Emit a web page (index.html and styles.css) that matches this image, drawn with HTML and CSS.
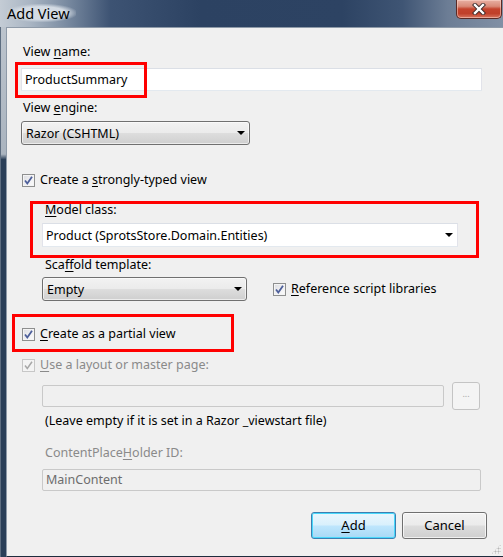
FILE: index.html
```html
<!DOCTYPE html>
<html>
<head>
<meta charset="utf-8">
<title>Add View</title>
<link rel="stylesheet" href="styles.css">
</head>
<body>
<div class="window">
  <div class="titlebar">
    <span class="title">Add View</span>
    <div class="close">
      <svg width="20" height="12" viewBox="0 0 20 12">
        <path d="M6 2 L14 10 M14 2 L6 10" stroke="#3b2a2a" stroke-width="4.2" stroke-linecap="square"/>
        <path d="M6 2 L14 10 M14 2 L6 10" stroke="#ffffff" stroke-width="2.4" stroke-linecap="square"/>
      </svg>
    </div>
  </div>
  <div class="body">
    <div class="frame-left"></div>
    <div class="panel">
      <div class="label l-name">View <u>n</u>ame:</div>
      <div class="textbox tb-name">ProductSummary</div>
      <div class="label l-engine">View <u>e</u>ngine:</div>
      <div class="combo combo-engine"><span>Razor (CSHTML)</span><i class="arrow"></i></div>

      <div class="check-row r-typed">
        <span class="cb"><svg width="13" height="13" viewBox="0 0 13 13"><path d="M3 6.5 L5.3 9.5 L10 2.8" stroke="#4d5f9a" stroke-width="1.8" fill="none"/></svg></span>
        <span>Create a <u>s</u>trongly-typed view</span>
      </div>

      <div class="indent">
        <div class="label l-model"><u>M</u>odel class:</div>
        <div class="textbox combo-edit"><span>Product (SprotsStore.Domain.Entities)</span><i class="arrow"></i></div>
        <div class="label l-scaffold">Sca<u>f</u>fold template:</div>
        <div class="scaffold-row">
          <div class="combo combo-scaffold"><span>Empty</span><i class="arrow"></i></div>
          <div class="check-row inline">
            <span class="cb"><svg width="13" height="13" viewBox="0 0 13 13"><path d="M3 6.5 L5.3 9.5 L10 2.8" stroke="#4d5f9a" stroke-width="1.8" fill="none"/></svg></span>
            <span><u>R</u>eference script libraries</span>
          </div>
        </div>
      </div>

      <div class="check-row r-partial">
        <span class="cb"><svg width="13" height="13" viewBox="0 0 13 13"><path d="M3 6.5 L5.3 9.5 L10 2.8" stroke="#4d5f9a" stroke-width="1.8" fill="none"/></svg></span>
        <span><u>C</u>reate as a partial view</span>
      </div>
      <div class="check-row r-layout disabled">
        <span class="cb"><svg width="13" height="13" viewBox="0 0 13 13"><path d="M3 6.5 L5.3 9.5 L10 2.8" stroke="#a8a8a8" stroke-width="1.5" fill="none"/></svg></span>
        <span><u>U</u>se a layout or master page:</span>
      </div>

      <div class="indent">
        <div class="layout-row">
          <div class="textbox tb-disabled tb-layout"></div>
          <div class="btn-browse">...</div>
        </div>
        <div class="label l-leave">(Leave empty if it is set in a Razor _viewstart file)</div>
        <div class="label l-cph disabled">ContentPlace<u>H</u>older ID:</div>
        <div class="textbox tb-disabled tb-cph">MainContent</div>
      </div>

      <div class="buttons">
        <div class="btn btn-default"><u>A</u>dd</div>
        <div class="btn">Cancel</div>
      </div>

      <div class="grip"></div>

      <div class="mark mark-1"></div>
      <div class="mark mark-2"></div>
      <div class="mark mark-3"></div>
    </div>
  </div>
</div>
</body>
</html>
```
FILE: styles.css
```css
* { box-sizing: border-box; }
html, body { margin: 0; padding: 0; }
body {
  width: 503px;
  height: 557px;
  overflow: hidden;
  font-family: "Noto Sans", "Open Sans", sans-serif;
  font-size: 12.5px;
  color: #000;
}
u { text-decoration: underline; text-underline-offset: 2px; }

.window {
  width: 503px;
  height: 557px;
  display: flex;
  flex-direction: column;
  background: #2b3f58;
}

.titlebar {
  height: 27px;
  flex: none;
  position: relative;
  display: flex;
  align-items: flex-start;
  background: linear-gradient(90deg, #c4ccd5 0%, #a9b5c3 6%, #7b8ca2 13%, #3d5373 22%, #2c4262 40%, #2d4363 68%, #3f5574 80%, #6c7d95 89%, #8190a5 100%);
}
.title {
  margin: 4px 0 0 7px;
  font-size: 14.5px;
  line-height: 18px;
  color: #000;
  padding: 0 6px 0 0;
  background: radial-gradient(ellipse at center, rgba(215,222,230,0.95) 50%, rgba(215,222,230,0) 75%);
}
.close {
  position: absolute;
  right: 1px;
  top: 0;
  width: 46px;
  height: 19px;
  border: 1px solid #5a2a25;
  border-top: none;
  border-radius: 0 0 5px 5px;
  background: linear-gradient(180deg, #e8b0a3 0%, #d98a78 35%, #c4432d 50%, #c0402a 75%, #d7755f 100%);
  box-shadow: inset 0 0 0 1px rgba(255,220,210,0.5);
  display: flex;
  align-items: center;
  justify-content: center;
}

.body {
  flex: 1;
  display: flex;
}
.frame-left {
  width: 6px;
  flex: none;
  background: linear-gradient(180deg, #bcc4cd 0%, #aab4bf 24%, #2a3f58 25%, #2a3f58 100%);
  border-left: 1px solid #5d6d80;
}
.panel {
  position: relative;
  flex: 1;
  height: 530px;
  background: #f0f0f0;
  border: 1px solid #8e9aa8;
  border-right: none;
  border-bottom: 1px solid #1e2c3e;
  padding: 0 16px 0 14px;
}

.label {
  line-height: 16px;
  padding-left: 2px;
  white-space: nowrap;
}
.disabled { color: #8a8a8a; }

.l-name { margin-top: 16px; }
.textbox {
  height: 23px;
  background: #fff;
  border: 1px solid #e2e3ea;
  border-top-color: #dbdfe6;
  border-bottom-color: #e3e9ef;
  line-height: 21px;
  padding-left: 3px;
  white-space: nowrap;
}
.tb-name { margin-top: 8px; width: 461px; }
.l-engine { margin-top: 9px; }

.combo {
  height: 24px;
  border: 1px solid #707070;
  border-radius: 3px;
  background: linear-gradient(180deg, #f2f2f2 0%, #ebebeb 48%, #dddddd 52%, #cfcfcf 100%);
  box-shadow: inset 0 0 0 1px rgba(255,255,255,0.6);
  display: flex;
  align-items: center;
  justify-content: space-between;
  padding: 0 4px 0 4px;
}
.arrow {
  width: 0; height: 0;
  border-left: 4px solid transparent;
  border-right: 4px solid transparent;
  border-top: 4px solid #000;
}
.combo-engine { margin-top: 5px; width: 229px; }

.check-row {
  display: flex;
  align-items: center;
  gap: 5px;
  line-height: 16px;
  height: 16px;
  white-space: nowrap;
  padding-left: 1px;
}
.cb {
  width: 13px;
  height: 13px;
  border: 1px solid #8e8f8f;
  background: linear-gradient(135deg, #dadbe0 0%, #f2f2f4 60%, #fbfbfb 100%);
  box-shadow: inset 0 0 0 1px #f4f4f4;
  display: flex;
  flex: none;
  position: relative;
}
.cb svg { position: absolute; left: -1px; top: -1px; }
.disabled .cb { border-color: #c7c7c7; background: #f4f4f4; }
.r-typed { margin-top: 27px; }

.indent { padding-left: 21px; }
.l-model { margin-top: 14px; padding-left: 3px; }
.combo-edit {
  margin-top: 5px;
  width: 416px;
  height: 24px;
  display: flex;
  align-items: center;
  justify-content: space-between;
  padding: 0 4px 0 3px;
}
.l-scaffold { margin-top: 10px; padding-left: 3px; }
.scaffold-row {
  margin-top: 4px;
  display: flex;
  align-items: center;
  gap: 26px;
}
.combo-scaffold { width: 205px; }
.check-row.inline { gap: 5px; padding-left: 0; }

.r-partial { margin-top: 25px; }
.r-layout { margin-top: 15px; }

.layout-row {
  margin-top: 9px;
  display: flex;
  align-items: center;
  gap: 8px;
  height: 28px;
}
.tb-disabled {
  background: #f0f0f0;
  border: 1px solid #c9c9c9;
  border-radius: 2px;
  height: 22px;
  line-height: 20px;
  color: #6d6d6d;
}
.tb-layout { width: 402px; }
.btn-browse {
  width: 28px;
  height: 28px;
  border: 1px solid #c4c4c4;
  border-radius: 3px;
  background: #f4f4f4;
  color: #a8a8a8;
  font-size: 9px;
  line-height: 22px;
  text-align: center;
}
.l-leave { margin-top: 3px; padding-left: 3px; }
.l-cph { margin-top: 16px; padding-left: 3px; }
.tb-cph { margin-top: 8px; width: 439px; }

.buttons {
  margin-top: 21px;
  display: flex;
  justify-content: flex-end;
  gap: 6px;
}
.btn {
  width: 85px;
  height: 27px;
  border: 1px solid #707070;
  border-radius: 3px;
  background: linear-gradient(180deg, #f2f2f2 0%, #ebebeb 48%, #dddddd 52%, #cfcfcf 100%);
  box-shadow: inset 0 0 0 1px rgba(255,255,255,0.7);
  text-align: center;
  line-height: 24px;
  font-size: 13px;
}
.btn-default {
  border-color: #3c7fb1;
  background: linear-gradient(180deg, #eaf6fd 0%, #d9f0fc 48%, #bee6fd 52%, #a7d9f5 100%);
  box-shadow: inset 0 0 0 1px #48d8fb;
}

.grip {
  position: absolute;
  right: 2px;
  bottom: 2px;
  width: 10px;
  height: 10px;
  background:
    radial-gradient(circle, #b8b8b8 0.8px, transparent 1.2px) 0 0 / 3px 3px;
  clip-path: polygon(100% 0, 100% 100%, 0 100%);
}

.mark {
  position: absolute;
  border: 3px solid #ff0000;
  pointer-events: none;
}
.mark-1 { left: 8px;  top: 34px;  width: 132px; height: 36px; }
.mark-2 { left: 23px; top: 173px; width: 449px; height: 57px; }
.mark-3 { left: 5px;  top: 286px; width: 222px; height: 38px; }
```
